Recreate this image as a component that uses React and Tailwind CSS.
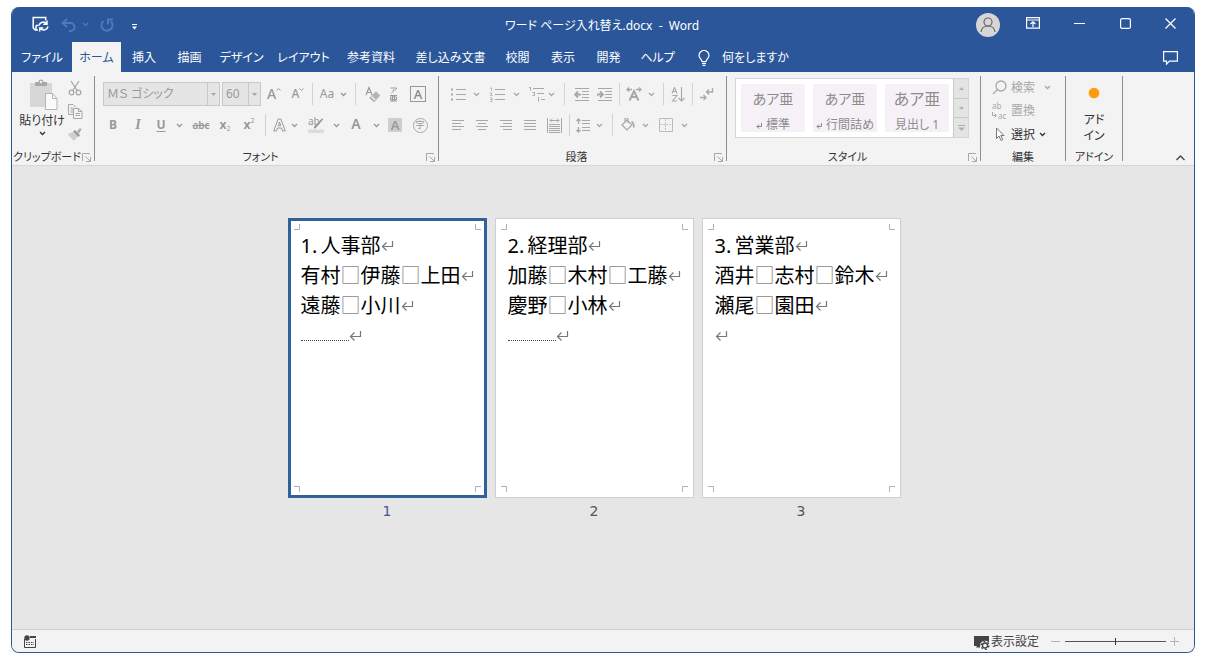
import React from "react";

function Svg({ w, h, children, className = "", sw = 1 }) {
  return (
    <svg
      width={w}
      height={h}
      viewBox={`0 0 ${w} ${h}`}
      fill="none"
      stroke="currentColor"
      strokeWidth={sw}
      className={`shrink-0 ${className}`}
      aria-hidden="true"
    >
      {children}
    </svg>
  );
}

const Chevron = ({ className = "" }) => (
  <Svg w={7} h={5} sw={1.3} className={className}>
    <path d="M1 1l2.5 2.5L6 1" />
  </Svg>
);

const ReturnMark = ({ className = "text-[#777]" }) => (
  <Svg w={13} h={12} sw={1.2} className={className}>
    <path d="M11.5 1v5.5H1.5M5.5 2.5l-4 4 4 4" />
  </Svg>
);

const SmallReturn = () => (
  <Svg w={6} h={7} sw={1} className="text-[#888]">
    <path d="M5.5 1v3.5H1M3 2.5l-2 2 2 2" />
  </Svg>
);

function Tool({ label, w, className = "", children }) {
  return (
    <button
      type="button"
      aria-label={label}
      className={`flex h-6 shrink-0 items-center justify-center ${w} ${className}`}
    >
      {children}
    </button>
  );
}

function Rule({ w }) {
  return (
    <span className={`flex shrink-0 justify-center ${w}`}>
      <span className="h-[22px] w-px bg-[#d2d2d2]" />
    </span>
  );
}

function Group({ title, w, launcher = true, className = "", children }) {
  return (
    <section
      aria-label={title}
      className={`flex shrink-0 flex-col justify-between border-r border-[#8f8f8f] ${w}`}
    >
      <div className={className}>{children}</div>
      <div className="flex h-2 items-center text-[#333]">
        <span className="flex-1 whitespace-nowrap text-center text-[11px] leading-[14px]">{title}</span>
        {launcher && (
          <button type="button" aria-label={`${title}の設定`} className="mr-[3px] text-[#a8a8a8]">
            <Svg w={9} h={9}>
              <path d="M.5 8V.5H8M3.5 3.5L8 8M8.5 4v4.5H4" />
            </Svg>
          </button>
        )}
      </div>
    </section>
  );
}

function Combo({ label, value, w }) {
  return (
    <div className={`flex h-6 shrink-0 border border-[#c8c8c8] bg-[#e5e5e5] ${w}`}>
      <select
        aria-label={label}
        className="min-w-0 flex-1 appearance-none pl-[3px] text-xs text-[#999] outline-none"
      >
        <option>{value}</option>
      </select>
      <span className="flex w-3 items-center justify-center border-l border-[#c8c8c8] text-[#a5a5a5]">
        <Svg w={5} h={3} sw={0}>
          <path d="M0 0h5L2.5 3z" fill="currentColor" />
        </Svg>
      </span>
    </div>
  );
}

const tabs = [
  ["ファイル", "w-[60px]"],
  ["ホーム", "w-[49px]"],
  ["挿入", "w-[46px]"],
  ["描画", "w-[45px]"],
  ["デザイン", "w-[59px]"],
  ["レイアウト", "w-[65px]"],
  ["参考資料", "w-[70px]"],
  ["差し込み文書", "w-[89px]"],
  ["校閲", "w-[45px]"],
  ["表示", "w-[46px]"],
  ["開発", "w-[45px]"],
  ["ヘルプ", "w-[53px]"],
];

function TitleBar() {
  return (
    <div className="flex h-[35px] items-center">
      <div className="flex flex-1 items-center pl-5">
        <button type="button" aria-label="上書き保存">
          <Svg w={17} h={17} sw={1.5}>
            <path d="M6 14H3.2L1.2 12V1.500h12.500v3M4 9.500v4.500M4 9.500h2.500" />
            <path d="M7 9.500a4.300 4.300 0 017.500-1.800M15 4.500v3.700h-3.700M16 10.500a4.300 4.300 0 01-7.500 2M7.700 15.500v-3.600h3.600" />
          </Svg>
        </button>
        <button type="button" aria-label="元に戻す" className="ml-3 text-[#5079b6]">
          <Svg w={15} h={14} sw={1.900}>
            <path d="M6 1L1.500 5 6 9M2 5h7.500a4 4 0 010 8H8" />
          </Svg>
        </button>
        <Chevron className="ml-[6px] text-[#5079b6]" />
        <button type="button" aria-label="やり直し" className="ml-[11px] text-[#5079b6]">
          <Svg w={14} h={14} sw={2}>
            <path d="M3.500 3a5.500 5.500 0 107.500.500M7.500 1.500h5.500M8 1v5.500" />
          </Svg>
        </button>
        <button type="button" aria-label="クイック アクセス ツール バーのカスタマイズ" className="ml-[18px] mt-1">
          <Svg w={5} h={6}>
            <path d="M0 .5h5" />
            <path d="M0 2.500h5L2.500 5.500z" fill="currentColor" stroke="none" />
          </Svg>
        </button>
      </div>
      <h1 className="mr-[22px] whitespace-pre pt-[3px] text-xs">ワード ページ入れ替え.docx  -  Word</h1>
      <div className="flex flex-1 items-center justify-end">
        <button type="button" aria-label="アカウント" className="mr-[26px] rounded-full bg-[#d6d6d6] text-[#666]">
          <Svg w={24} h={24} sw={1.2}>
            <circle cx="12" cy="9" r="4" />
            <path d="M5 19c.5-4 3.300-6 7-6s6.500 2 7 6" />
          </Svg>
        </button>
        <button type="button" aria-label="リボンの表示オプション" className="mb-[3px] mr-[34px]">
          <Svg w={14} h={12} sw={1.2}>
            <path d="M.6.6h12.800v10.500H.6zM.6 3h12.800M7 10V5M4.500 7L7 4.800 9.500 7" />
          </Svg>
        </button>
        <button type="button" aria-label="最小化" className="mb-[3px] mr-[35px]">
          <Svg w={11} h={11} sw={1.2}>
            <path d="M0 5.500h11" />
          </Svg>
        </button>
        <button type="button" aria-label="最大化" className="mb-[3px] mr-[34px]">
          <Svg w={11} h={11} sw={1.2}>
            <rect x=".6" y=".6" width="9.800" height="9.800" rx="1.500" />
          </Svg>
        </button>
        <button type="button" aria-label="閉じる" className="mb-[3px] mr-[18px]">
          <Svg w={11} h={11} sw={1.300}>
            <path d="M.5.5l10 10M10.500.5l-10 10" />
          </Svg>
        </button>
      </div>
    </div>
  );
}

function TabBar() {
  return (
    <nav className="flex h-[30px] items-stretch text-xs">
      {tabs.map(([name, w]) => (
        <button
          key={name}
          type="button"
          className={`shrink-0 whitespace-nowrap pt-[2px] ${w} ${name === "ホーム" ? "bg-[#f3f3f3] text-[#2b579a]" : ""}`}
        >
          {name}
        </button>
      ))}
      <button type="button" className="ml-[14px] flex items-center gap-3 pt-[2px]">
        <Svg w={12} h={16} sw={1.200}>
          <path d="M4 11.500C4 9 1 8.500 1 5.500a5 5 0 0110 0c0 3-3 3.500-3 6zM4 13.300h4M4.500 15.300h3" />
        </Svg>
        <span>何をしますか</span>
      </button>
      <button type="button" aria-label="コメント" className="ml-auto mr-4 flex items-center pt-[2px]">
        <Svg w={15} h={14} sw={1.200}>
          <path d="M.6.6h13.800v9.500H6.500l-3 3v-3H.6z" />
        </Svg>
      </button>
    </nav>
  );
}

function ClipboardGroup() {
  return (
    <Group title="クリップボード" w="w-[83px]" className="flex">
      <button type="button" className="ml-2 mt-[3px] flex w-[44px] flex-col items-center text-xs text-[#333]">
        <Svg w={28} h={32} sw={0} className="ml-1">
          <path d="M0 4h22v24H0z" fill="#d9d6da" />
          <path d="M5 3h3.500a2.500 2.500 0 015 0H17v4H5z" fill="#a9a9a9" />
          <circle cx="11" cy="3" r="1.200" fill="#f3f3f3" />
          <path d="M15.500 14.500h7l4.500 5v11H15.500z" fill="#fbfafb" stroke="#b5b5b5" strokeWidth="1" />
          <path d="M22.500 14.500v5H27" fill="none" stroke="#b5b5b5" strokeWidth="1" />
        </Svg>
        <span className="whitespace-nowrap leading-5">貼り付け</span>
        <Chevron />
      </button>
      <div className="ml-[3px] flex flex-col items-center text-[#a8a8a8]">
        <Tool label="切り取り" w="w-4">
          <Svg w={14} h={16} sw={1.300}>
            <path d="M3 1l6.500 10M11 1L4.500 11" />
            <circle cx="3.500" cy="12.500" r="2.300" />
            <circle cx="10.500" cy="12.500" r="2.300" />
          </Svg>
        </Tool>
        <Tool label="コピー" w="w-4" className="-mt-px">
          <Svg w={15} h={15}>
            <path d="M5 10.500H.5V.5H5l3 3M2.500 4H5M2.500 6H5M2.500 8H5" />
            <path d="M5.500 4.500h5l3.500 3v7H5.500zM10.500 4.500v3H14M7.500 9.500h4.500M7.500 11.500h4.500" />
          </Svg>
        </Tool>
        <Tool label="書式のコピー" w="w-4" className="-mt-px">
          <Svg w={15} h={13} sw={0}>
            <path d="M0 6l5-2 5 4-4 5C5 11 1 9 0 6z" fill="#cfcfcf" />
            <path d="M5 3.500l2-1.500 5 5-1.500 2z" fill="#999" />
            <path d="M9 3.500L12 0l1.500 1.500L11 5.500z" fill="#aaa" />
          </Svg>
        </Tool>
      </div>
    </Group>
  );
}

function FontGroup() {
  return (
    <Group title="フォント" w="w-[344px]" className="flex flex-col gap-[7px] pl-2 pt-[6px] text-[#999]">
      <div className="flex items-center">
        <Combo label="フォント名" value="ＭＳ ゴシック" w="w-[117px]" />
        <span className="w-[2px]" />
        <Combo label="フォント サイズ" value="60" w="w-[39px]" />
        <Tool label="フォント サイズの拡大" w="w-[26px]">
          <span className="text-sm font-medium leading-4">A</span>
          <Svg w={5} h={12}><path d="M.5 2.500l2-2 2 2" /></Svg>
        </Tool>
        <Tool label="フォント サイズの縮小" w="w-[22px]">
          <span className="text-xs font-medium leading-4">A</span>
          <Svg w={5} h={12}><path d="M.5.5l2 2 2-2" /></Svg>
        </Tool>
        <Rule w="w-[6px]" />
        <Tool label="文字種の変換" w="w-[24px]"><span className="text-xs">Aa</span></Tool>
        <Tool label="文字種の一覧" w="w-[8px]"><Chevron /></Tool>
        <Rule w="w-[16px]" />
        <Tool label="書式のクリア" w="w-[18px]">
          <Svg w={15} h={16} sw={1.200}>
            <path d="M1 9L4 1.500 7 9M2 6.500h4" />
            <path d="M5 12l6-6 3.500 3.500-5.500 6z" fill="#b5b5b5" stroke="#b5b5b5" />
            <path d="M6.500 10.500l3.500 3.500" stroke="#f3f3f3" />
          </Svg>
        </Tool>
        <Tool label="ルビ" w="w-6">
          <Svg w={9} h={15}>
            <path d="M1.500 1h6c0 1.500-1 2-2 2.500M4.500 2.500c0 2-1 3-2 3.500" />
            <path d="M1 8.500h7M1 14h7M3.500 8.500V14M5.500 8.500V14M1.500 10h6v2.500h-6z" />
          </Svg>
        </Tool>
        <Tool label="囲み線" w="w-[26px]">
          <span className="flex size-4 items-center justify-center border border-[#999] text-[13px] font-medium leading-3 text-[#888]">A</span>
        </Tool>
      </div>
      <div className="flex items-center">
        <Tool label="太字" w="w-5"><span className="text-xs font-bold">B</span></Tool>
        <Tool label="斜体" w="w-[30px]">
          <span className="text-sm font-bold italic [font-family:'Liberation_Serif',serif]">I</span>
        </Tool>
        <Tool label="下線" w="w-4"><span className="text-xs font-bold underline underline-offset-2">U</span></Tool>
        <Tool label="下線の種類" w="w-5"><Chevron /></Tool>
        <Tool label="取り消し線" w="w-6"><span className="text-[10px] font-semibold line-through">abc</span></Tool>
        <Tool label="下付き" w="w-6">
          <span className="text-xs font-bold">x</span><span className="pt-2 text-[7px]">2</span>
        </Tool>
        <Tool label="上付き" w="w-6">
          <span className="text-xs font-bold">x</span><span className="pb-2 text-[7px]">2</span>
        </Tool>
        <Rule w="w-[9px]" />
        <Tool label="文字の効果" w="w-[18px]">
          <Svg w={13} h={14}>
            <path d="M.7 13L5.200 1h2.600l4.500 12H9.500l-1-3h-4l-1 3zM5.300 7.700h2.400L6.500 4z" strokeLinejoin="round" />
          </Svg>
        </Tool>
        <Tool label="文字の効果の一覧" w="w-3"><Chevron /></Tool>
        <Tool label="蛍光ペンの色" w="w-[32px]">
          <span className="relative flex h-4 w-4 items-start">
            <Svg w={16} h={16} sw={0} className="absolute left-0 top-0">
              <path d="M15.500 2L10 8.500l-2.500 3-2-.5 1.500-2.500 7-7z" fill="#999" />
              <path d="M0 12.500h16V16H0z" fill="#dcdadc" />
            </Svg>
            <span className="text-[10px] leading-[8px]">ab</span>
          </span>
        </Tool>
        <Tool label="蛍光ペンの一覧" w="w-[8px]"><Chevron /></Tool>
        <Tool label="フォントの色" w="w-[32px]"><span className="pb-[2px] text-sm font-semibold leading-4">A</span></Tool>
        <Tool label="フォントの色の一覧" w="w-[8px]"><Chevron /></Tool>
        <Tool label="文字の網かけ" w="w-[30px]">
          <span className="flex size-[14px] items-center justify-center bg-[#cfcdcf] text-[13px] font-semibold leading-3">A</span>
        </Tool>
        <Tool label="囲い文字" w="w-[20px]">
          <span className="flex size-[15px] items-center justify-center rounded-full border border-[#aaa] text-[9px] leading-3">字</span>
        </Tool>
      </div>
    </Group>
  );
}

function Lines({ rows }) {
  return (
    <Svg w={12} h={10}>
      {rows.map(([a, b], i) => (
        <path key={i} d={`M${a} ${i * 3 + 0.5}H${b}`} />
      ))}
    </Svg>
  );
}

function ParagraphGroup() {
  return (
    <Group title="段落" w="w-[288px]" className="flex flex-col gap-[7px] pl-2 pt-[6px] text-[#a8a8a8]">
      <div className="flex items-center">
        <Tool label="箇条書き" w="w-[22px]">
          <Svg w={15} h={13}>
            <path d="M5 1.500h10M5 6.500h10M5 11.500h10" />
            <path d="M0 1.500h2M0 6.500h2M0 11.500h2" strokeWidth="2" />
          </Svg>
        </Tool>
        <Tool label="箇条書きの一覧" w="w-[14px]"><Chevron /></Tool>
        <Tool label="段落番号" w="w-7">
          <Svg w={15} h={15}>
            <path d="M5 2.500h10M5 7.500h10M5 12.500h10" />
            <path d="M0 1h1.500v3M0 6h2L.5 8.500H2.500M0 11h2v3.500H0M.5 12.500H2" strokeWidth=".8" />
          </Svg>
        </Tool>
        <Tool label="段落番号の一覧" w="w-[10px]"><Chevron /></Tool>
        <Tool label="アウトライン" w="w-6" className="pl-2">
          <Svg w={16} h={15}>
            <path d="M4 1.500h11M8 6.500h7M12 12.500h4" />
            <path d="M0 .5h1.500v3M3.500 5.500h2v3h-2M9.500 10v4.500" />
          </Svg>
        </Tool>
        <Tool label="アウトラインの一覧" w="w-3"><Chevron /></Tool>
        <Rule w="w-[14px]" />
        <Tool label="インデントを減らす" w="w-5">
          <Svg w={15} h={13}>
            <path d="M1 .5h14M8 3.500h7M8 6.500h7M8 9.500h7M1 12.500h14" />
            <path d="M7 6.500H1M4 3.500l-3 3 3 3" strokeWidth="1.800" />
          </Svg>
        </Tool>
        <Tool label="インデントを増やす" w="w-[26px]">
          <Svg w={15} h={13}>
            <path d="M1 .5h14M8 3.500h7M8 6.500h7M8 9.500h7M1 12.500h14" />
            <path d="M0 6.500h6M3 3.500l3 3-3 3" strokeWidth="1.800" />
          </Svg>
        </Tool>
        <Rule w="w-1" />
        <Tool label="拡張書式" w="w-[26px]">
          <Svg w={16} h={14} sw={1.300}>
            <path d="M3.500 13.500L8 4l4.500 9.500M5.500 10h5" strokeWidth="2" />
            <path d="M1 2.500h5M3 .5l-2 2 2 2M10 2.500h5M13 .5l2 2-2 2" />
          </Svg>
        </Tool>
        <Tool label="拡張書式の一覧" w="w-[8px]"><Chevron /></Tool>
        <Rule w="w-4" />
        <Tool label="並べ替え" w="w-[14px]">
          <Svg w={14} h={15} sw={1.100}>
            <path d="M1 6.500l2.500-6 2.500 6M2 4.500h3M1.500 8.500H6l-4.500 5.500H6M10.500 0v14M7.500 11l3 3 3-3" />
          </Svg>
        </Tool>
        <Rule w="w-[14px]" />
        <Tool label="編集記号の表示" w="w-4">
          <Svg w={14} h={13} sw={1.300}>
            <path d="M12.500 0v4H6.500M9 1.500L6.500 4 9 6.500M0 9.500h6M3.500 7L6 9.500 3.500 12" />
          </Svg>
        </Tool>
      </div>
      <div className="flex items-center">
        <Tool label="左揃え" w="w-[22px]"><Lines rows={[[0, 12], [0, 9], [0, 12], [0, 9]]} /></Tool>
        <Tool label="中央揃え" w="w-[26px]"><Lines rows={[[0, 12], [2, 10], [0, 12], [2, 10]]} /></Tool>
        <Tool label="右揃え" w="w-[22px]"><Lines rows={[[0, 12], [3, 12], [0, 12], [3, 12]]} /></Tool>
        <Tool label="両端揃え" w="w-[26px]"><Lines rows={[[0, 12], [0, 12], [0, 12], [0, 12]]} /></Tool>
        <Tool label="均等割り付け" w="w-[22px]">
          <Svg w={15} h={15}>
            <path d="M.5 0v15M14.500 0v15M2 6.500h11M2 8.500h11M2 10.500h11M2 12.500h11M2 14.500h11" />
            <path d="M3 2.500h9M5 .5l-2 2 2 2M10 .5l2 2-2 2" />
          </Svg>
        </Tool>
        <Rule w="w-2" />
        <Tool label="行と段落の間隔" w="w-5">
          <Svg w={14} h={15}>
            <path d="M6 2.500h8M6 5.500h8M6 9.500h8M6 12.500h8" />
            <path d="M2.500 1v5M.5 3l2-2 2 2M2.500 9v5M.5 12l2 2 2-2" strokeWidth="1.300" />
          </Svg>
        </Tool>
        <Tool label="行間の一覧" w="w-3"><Chevron /></Tool>
        <Rule w="w-[14px]" />
        <Tool label="塗りつぶし" w="w-[18px]">
          <Svg w={14} h={14} sw={1.200}>
            <path d="M1 7l5-5 5 5-5 5zM4 3.500V1.500a1.500 1.500 0 013 0V5" />
            <path d="M10.500 3.500c2 1 2.500 3 2.300 6" strokeWidth="1.700" />
          </Svg>
        </Tool>
        <Tool label="塗りつぶしの一覧" w="w-4"><Chevron /></Tool>
        <Tool label="罫線" w="w-[26px]">
          <Svg w={14} h={14}>
            <path d="M.5.5h13v13H.5z" stroke="#c0b6c2" />
            <path d="M6.500 1v12M1 6.500h12" stroke="#c8bccb" strokeDasharray="2 1" />
          </Svg>
        </Tool>
        <Tool label="罫線の一覧" w="w-[10px]"><Chevron /></Tool>
      </div>
    </Group>
  );
}

function StyleCard({ name, mark, sample }) {
  return (
    <button type="button" className="flex h-12 w-16 flex-col items-center justify-between overflow-hidden bg-[#f5f1f7] pt-[6px] text-[#8c8c8c]">
      <span className={`whitespace-nowrap leading-[18px] ${sample}`}>あア亜</span>
      <span className="flex items-center gap-1 whitespace-nowrap text-xs leading-[14px]">
        {mark && <SmallReturn />}
        {name}
      </span>
    </button>
  );
}

function StylesGroup() {
  return (
    <Group title="スタイル" w="w-[254px]" className="px-2 pt-[2px]">
      <div className="flex h-[60px] w-[234px] border border-[#d4d4d4] bg-white">
        <div className="flex flex-1 items-center gap-2 pl-[5px]">
          <StyleCard name="標準" mark sample="text-sm" />
          <StyleCard name="行間詰め" mark sample="text-sm" />
          <StyleCard name="見出し 1" sample="text-base" />
        </div>
        <div className="flex w-[15px] flex-col divide-y divide-[#c9c9c9] border-l border-[#c9c9c9] bg-[#e4e4e4] text-[#b0b0b0]">
          <button type="button" aria-label="前のスタイル" className="flex flex-1 items-center justify-center">
            <Svg w={5} h={3} sw={0}><path d="M0 3h5L2.500 0z" fill="currentColor" /></Svg>
          </button>
          <button type="button" aria-label="次のスタイル" className="flex flex-1 items-center justify-center">
            <Svg w={5} h={3} sw={0}><path d="M0 0h5L2.500 3z" fill="currentColor" /></Svg>
          </button>
          <button type="button" aria-label="スタイルの一覧" className="flex flex-1 items-center justify-center">
            <Svg w={7} h={6}>
              <path d="M0 .5h7" />
              <path d="M0 2.500h7L3.500 6z" fill="currentColor" stroke="none" />
            </Svg>
          </button>
        </div>
      </div>
    </Group>
  );
}

function EditGroup() {
  return (
    <Group title="編集" w="w-[85px]" launcher={false} className="flex flex-col pl-[11px] text-xs text-[#a8a8a8]">
      <button type="button" className="flex h-[23px] items-center gap-1">
        <Svg w={15} h={15} sw={1.300}>
          <circle cx="9" cy="6" r="5" />
          <path d="M5.500 9.500L1 14" />
        </Svg>
        <span>検索</span>
        <Chevron className="ml-[5px]" />
      </button>
      <button type="button" className="flex h-6 items-center gap-1">
        <span className="relative grid h-5 w-[15px] grid-rows-2 text-left text-[8px] leading-[10px]">
          <span>ab</span>
          <span className="pl-[6px]">ac</span>
          <Svg w={5} h={6} className="absolute left-0 top-[11px]">
            <path d="M.5 0v3.500H4M2.500 1.500l2 2-2 2" />
          </Svg>
        </span>
        <span>置換</span>
      </button>
      <button type="button" className="flex h-[23px] items-center gap-1 text-[#333]">
        <Svg w={15} h={15} className="text-[#777]">
          <path d="M4.500 1v10.500l2.500-2.500 2 4.500 1.800-.8-2-4.200H12z" fill="#fff" />
        </Svg>
        <span>選択</span>
        <Chevron />
      </button>
    </Group>
  );
}

function Ribbon() {
  return (
    <div className="flex h-[94px] border-b border-[#d6d6d6] bg-[#f3f3f3] pb-1 pt-1">
      <ClipboardGroup />
      <FontGroup />
      <ParagraphGroup />
      <StylesGroup />
      <EditGroup />
      <Group title="アドイン" w="w-[57px]" launcher={false} className="flex justify-center">
        <button type="button" className="flex w-8 flex-col items-center text-xs leading-4 text-[#333]">
          <Svg w={12} h={12} sw={0} className="mb-[13px] mt-[11px]">
            <circle cx="6" cy="6" r="5.300" fill="#ff9a0a" />
          </Svg>
          <span>アド</span>
          <span>イン</span>
        </button>
      </Group>
      <div className="flex flex-1 items-end justify-end pr-[9px] text-[#444]">
        <button type="button" aria-label="リボンを折りたたむ" className="h-[6px]">
          <Svg w={9} h={6} sw={1.300}>
            <path d="M.5 5l4-4 4 4" />
          </Svg>
        </button>
      </div>
    </div>
  );
}

const pages = [
  { n: 1, title: "人事部", lines: ["有村□伊藤□上田", "遠藤□小川"], breakLine: true },
  { n: 2, title: "経理部", lines: ["加藤□木村□工藤", "慶野□小林"], breakLine: true },
  { n: 3, title: "営業部", lines: ["酒井□志村□鈴木", "瀬尾□園田"], breakLine: false },
];

function DocLine({ children }) {
  return (
    <p className="flex h-[30px] items-center whitespace-nowrap">
      {children}
      <ReturnMark />
    </p>
  );
}

function CropMarks() {
  return (
    <>
      <Svg w={6} h={6} className="absolute left-[6px] top-[6px] text-[#b0b0b0]"><path d="M5.500 0v5.500H0" /></Svg>
      <Svg w={6} h={6} className="absolute right-[6px] top-[6px] text-[#b0b0b0]"><path d="M.5 0v5.500H6" /></Svg>
      <Svg w={6} h={6} className="absolute bottom-[6px] left-[6px] text-[#b0b0b0]"><path d="M0 .5h5.500V6" /></Svg>
      <Svg w={6} h={6} className="absolute bottom-[6px] right-[6px] text-[#b0b0b0]"><path d="M6 .5H.5V6" /></Svg>
    </>
  );
}

function Page({ page, selected }) {
  return (
    <figure className="flex flex-col items-center">
      <div
        className={`relative h-[280px] w-[199px] bg-white pl-[13px] pt-[13px] text-xl text-black ${
          selected ? "ring-[3px] ring-inset ring-[#2f6299]" : "ring-1 ring-inset ring-[#cfcfcf]"
        }`}
      >
        <CropMarks />
        <DocLine>
          <span className="w-5">{page.n}.</span>
          <span>{page.title}</span>
        </DocLine>
        {page.lines.map((line) => (
          <DocLine key={line}>
            {line.split("").map((c, i) => (
              <span key={i} className={c === "□" ? "text-[#888]" : ""}>
                {c}
              </span>
            ))}
          </DocLine>
        ))}
        <DocLine>
          {page.breakLine && <span className="mt-2 w-12 border-t border-dotted border-[#444]" />}
        </DocLine>
      </div>
      <figcaption
        className={`mt-[3px] text-sm leading-5 [font-family:'DejaVu_Sans',sans-serif] ${
          selected ? "text-[#41569f]" : "text-[#555]"
        }`}
      >
        {page.n}
      </figcaption>
    </figure>
  );
}

function StatusBar() {
  return (
    <footer className="flex h-[23px] items-center border-t border-[#d0d0d0] bg-[#f3f3f3] text-xs text-[#444]">
      <button type="button" aria-label="マクロの記録" className="ml-3">
        <Svg w={13} h={13}>
          <path d="M.5 4v8.500h11V4M6 2.500h6" />
          <path d="M6 2h6" strokeWidth="2" />
          <circle cx="3" cy="3" r="2.700" fill="currentColor" stroke="none" />
          <path d="M2 7.500h8M2 9.500h8" strokeDasharray="1.500 1" />
        </Svg>
      </button>
      <button type="button" className="ml-auto flex items-center gap-px pt-[2px]">
        <Svg w={16} h={15} sw={0}>
          <path d="M0 1h15v7H6.500v3H0zM3 11h3v1.500H2z" fill="#444" />
          <circle cx="11" cy="10.500" r="4.800" fill="#f3f3f3" />
          <circle cx="11" cy="10.500" r="2.500" fill="none" stroke="#444" strokeWidth="1.300" />
          <circle cx="11" cy="10.500" r="3.900" fill="none" stroke="#444" strokeWidth="1.300" strokeDasharray="2 2.080" />
        </Svg>
        <span className="whitespace-nowrap">表示設定</span>
      </button>
      <button type="button" aria-label="縮小" className="ml-3 text-[#b5b5b5]">
        <Svg w={9} h={9}><path d="M0 4.500h9" /></Svg>
      </button>
      <input
        type="range"
        aria-label="ズーム"
        min="0"
        max="100"
        defaultValue="50"
        className="ml-[5px] h-3 w-[101px] appearance-none bg-transparent [&::-webkit-slider-runnable-track]:h-px [&::-webkit-slider-runnable-track]:bg-[#555] [&::-webkit-slider-thumb]:-mt-[3px] [&::-webkit-slider-thumb]:h-[7px] [&::-webkit-slider-thumb]:w-px [&::-webkit-slider-thumb]:appearance-none [&::-webkit-slider-thumb]:bg-[#333]"
      />
      <button type="button" aria-label="拡大" className="ml-1 mr-[15px] text-[#b5b5b5]">
        <Svg w={9} h={9}><path d="M0 4.500h9M4.500 0v9" /></Svg>
      </button>
    </footer>
  );
}

export default function App() {
  return (
    <div className="flex min-h-screen flex-col bg-white pb-3 pl-[11px] pr-[14px] pt-[7px] [font-family:'Noto_Sans','Noto_Sans_CJK_JP',sans-serif]">
      <div className="flex flex-1 flex-col overflow-hidden rounded-lg border-x border-b border-[#2b579a] bg-[#e6e6e6] [font-feature-settings:'palt']">
        <header className="bg-[#2b579a] text-white">
          <TitleBar />
          <TabBar />
        </header>
        <Ribbon />
        <main className="flex flex-1 items-start justify-center gap-2 pr-[18px] pt-[52px] [font-feature-settings:normal]">
          {pages.map((p) => (
            <Page key={p.n} page={p} selected={p.n === 1} />
          ))}
        </main>
        <StatusBar />
      </div>
    </div>
  );
}
